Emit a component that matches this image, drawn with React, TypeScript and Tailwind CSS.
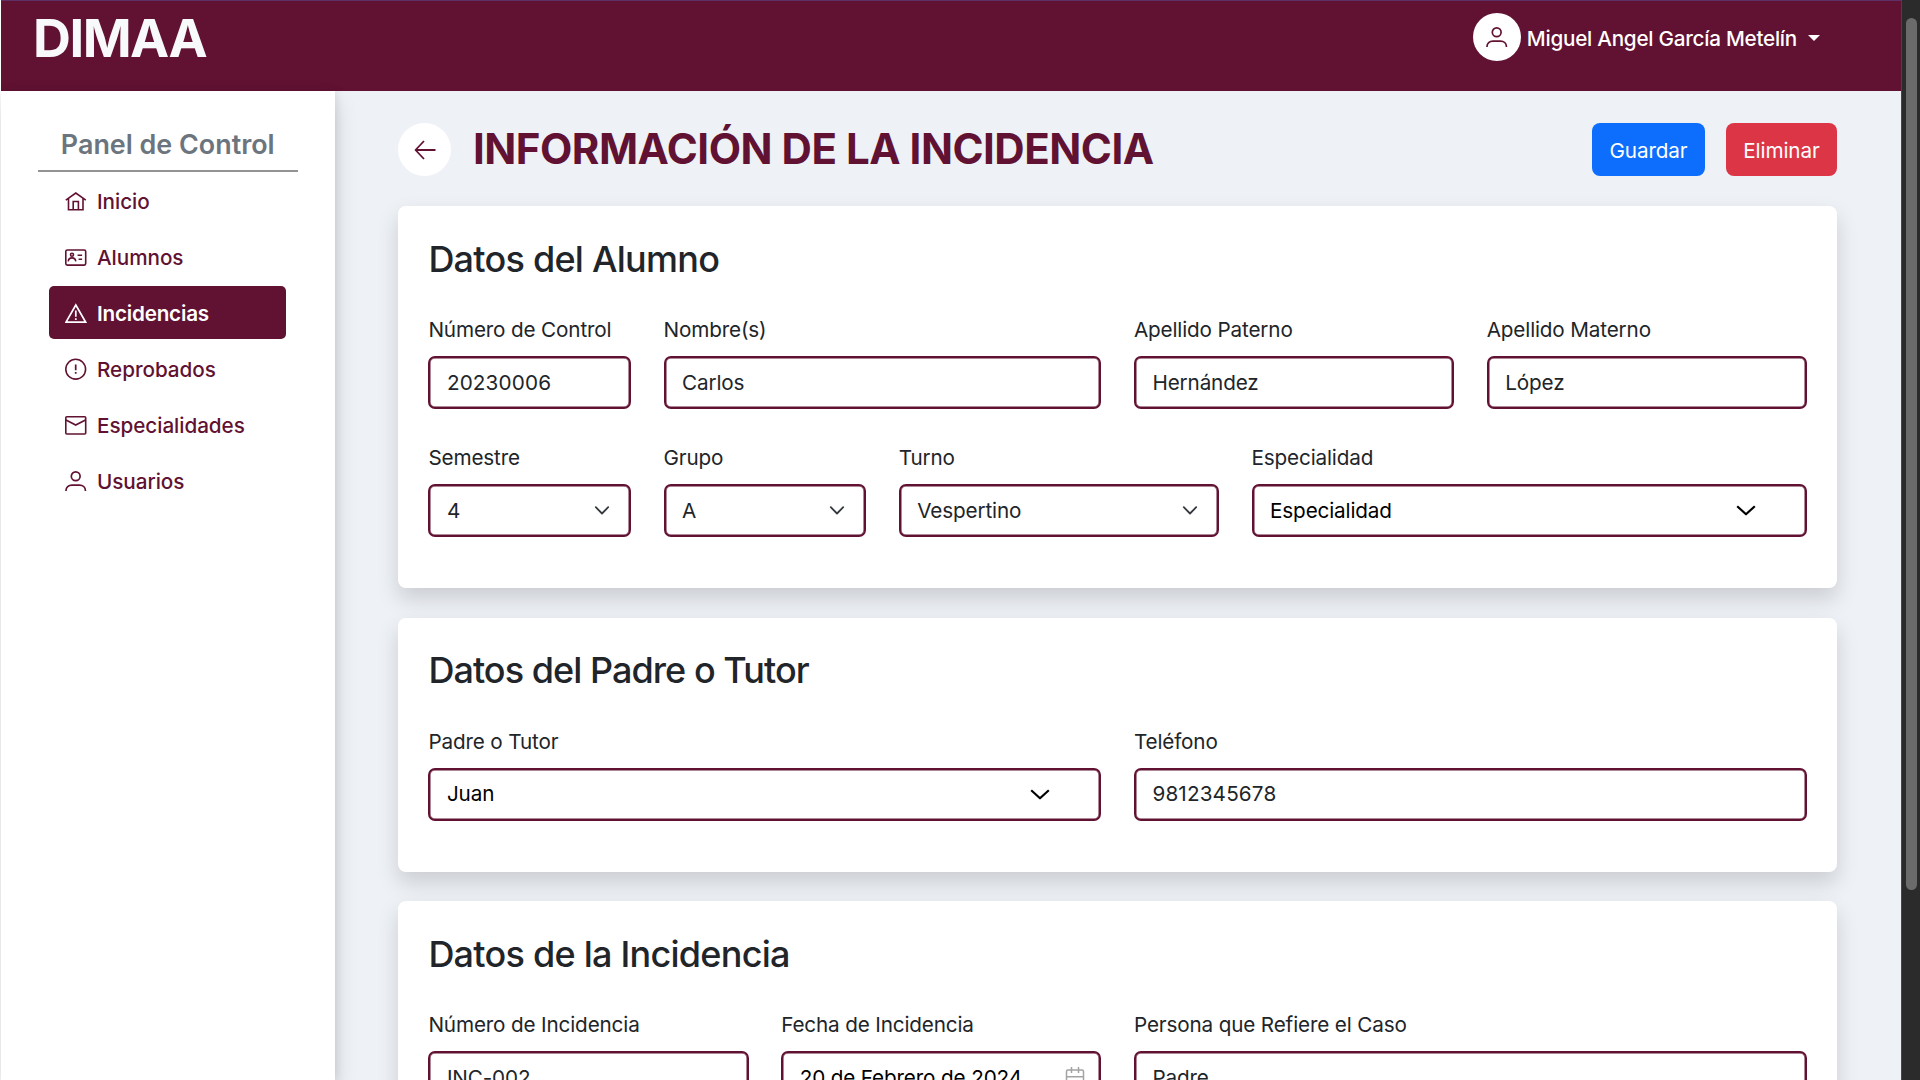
import React from 'react';

type IconProps = { children: React.ReactNode };

function NavIcon({ children }: IconProps) {
  return (
    <svg viewBox="0 0 22 22" className="h-[22px] w-[22px] shrink-0" fill="none" stroke="currentColor" strokeWidth="1.6">
      {children}
    </svg>
  );
}

const HomeIcon = () => (
  <NavIcon>
    <path d="M0.8 10.2 10.8 3l10 7.200M3.500 8.600V19.700H18V8.600" />
    <path d="M8.200 19.700V11.500h5.200v8.200" />
  </NavIcon>
);

const CardIcon = () => (
  <NavIcon>
    <rect x="0.8" y="4" width="19.900" height="15.100" rx="1.500" />
    <circle cx="7" cy="8.700" r="1.500" />
    <path d="M3.200 15.400c.4-2.600 1.900-3.500 3.800-3.500s3.400.9 3.800 3.500M12.600 9.300h4.500M13.600 13.200h3.500" />
  </NavIcon>
);

const WarningIcon = () => (
  <NavIcon>
    <path d="M10.800 3 20.600 20.100H1Z" strokeWidth="1.700" />
    <path d="M10.800 8.500v6.200M10.800 16.200v1.800" strokeWidth="1.700" />
  </NavIcon>
);

const AlertIcon = () => (
  <NavIcon>
    <circle cx="10.700" cy="11.200" r="9.900" />
    <path d="M10.700 6.600v5.700M10.700 13.900v1.900" strokeWidth="1.700" />
  </NavIcon>
);

const MailIcon = () => (
  <NavIcon>
    <rect x="0.8" y="2.800" width="19.900" height="17.200" rx="1" />
    <path d="M1 6l9.700 5L20.500 6" />
  </NavIcon>
);

const UserIcon = () => (
  <NavIcon>
    <circle cx="10.700" cy="6.300" r="4.400" strokeWidth="1.700" />
    <path d="M0.900 21c0-3.800 2.700-5.800 6-5.800h7.600c3.300 0 6 2 6 5.800" strokeWidth="1.700" />
  </NavIcon>
);

const navItems = [
  { label: 'Inicio', icon: <HomeIcon /> },
  { label: 'Alumnos', icon: <CardIcon /> },
  { label: 'Incidencias', icon: <WarningIcon />, active: true },
  { label: 'Reprobados', icon: <AlertIcon /> },
  { label: 'Especialidades', icon: <MailIcon /> },
  { label: 'Usuarios', icon: <UserIcon /> },
];

function Header() {
  return (
    <header className="ml-px flex h-[91px] shrink-0 items-start justify-between border-t border-[#5d3068] bg-[#611232] pr-[81px] pl-8">
      <div className="mt-[11px] text-[52.5px] leading-[53px] font-bold tracking-[-1.5px] text-[#f8f9fa]">DIMAA</div>
      <div className="mt-3 flex items-center text-white">
        <span className="flex size-12 items-center justify-center rounded-full bg-white pl-px text-[#611232]">
          <UserIcon />
        </span>
        <span className="mt-1 ml-1.5 text-[20.7px] font-medium tracking-[-0.26px]">Miguel Angel García Metelín</span>
        <svg viewBox="0 0 12 6" className="mt-0.5 ml-[11px] h-1.5 w-3" fill="currentColor">
          <path d="M0 0h12L6 6z" />
        </svg>
      </div>
    </header>
  );
}

function Sidebar() {
  return (
    <aside className="relative z-10 ml-px flex w-[333.500px] shrink-0 flex-col bg-white shadow-[0_10.7px_21.3px_rgba(0,0,0,0.15),2px_0_8px_rgba(0,0,0,0.08)]">
      <h2 className="mx-[37px] mt-7 h-[53px] border-b-2 border-[#919395] pt-[5px] text-center text-[26.9px] leading-[40px] font-semibold text-[#6c757d]">
        Panel de Control
      </h2>
      <nav className="mt-0.5 flex flex-col gap-[3px] px-12">
        {navItems.map((item) => (
          <a
            key={item.label}
            className={
              item.active
                ? 'flex h-[53px] w-[237px] items-center gap-2.5 rounded-[5px] bg-[#611232] pl-4 text-[20.7px] font-semibold tracking-[-0.22px] text-white'
                : 'flex h-[53px] w-[237px] items-center gap-2.5 rounded-[5px] pl-4 text-[20.7px] font-medium tracking-[-0.05px] text-[#611232]'
            }
          >
            {item.icon}
            <span className="pt-[3px]">{item.label}</span>
          </a>
        ))}
      </nav>
    </aside>
  );
}

type CardProps = { title: string; titleClass?: string; children: React.ReactNode };

function Card({ title, titleClass = 'tracking-[-0.75px]', children }: CardProps) {
  return (
    <section className="shrink-0 rounded-lg bg-white px-[30px] pt-[30.9px] pb-[19px] shadow-[0_10.7px_21.3px_rgba(0,0,0,0.15)]">
      <h3 className={`mb-[31.6px] text-[36px] leading-[44.8px] font-medium text-[#212529] ${titleClass}`}>{title}</h3>
      <div className="grid grid-cols-12 gap-x-[32.5px]">{children}</div>
    </section>
  );
}

type FieldProps = {
  label: string;
  value: string;
  span: string;
  kind?: 'input' | 'select' | 'combo' | 'date';
};

function Field({ label, value, span, kind = 'input' }: FieldProps) {
  const dark = kind === 'combo' || kind === 'date';
  const numeric = /^\d{2,}$/.test(value);
  return (
    <label className={span}>
      <span className="block pt-[0.9px] pb-[9.8px] text-[20.7px] leading-8 tracking-[-0.15px] text-[#212529]">{label}</span>
      <span className="mb-8 flex h-[53px] items-center justify-between rounded-[7px] border-2 border-[#611232] bg-white pl-[16.500px] shadow-[inset_0_0_0_0.500px_#611232]">
        <span
          className={`text-[20.7px] ${numeric ? 'tracking-[0.15px]' : 'tracking-[-0.14px]'} ${dark ? 'text-black' : 'text-[#212529]'}`}
        >
          {value}
        </span>
        {kind === 'select' && (
          <svg viewBox="0 0 16 9" className="mr-[19px] h-[9px] w-4" fill="none" stroke="#343a40" strokeWidth="1.8" strokeLinecap="round" strokeLinejoin="round">
            <path d="M1.800 1.200 8 7.500 14.200 1.200" />
          </svg>
        )}
        {kind === 'combo' && (
          <svg viewBox="0 0 20 11" className="mr-[49px] h-[11px] w-5" fill="none" stroke="#000" strokeWidth="2.200" strokeLinejoin="round">
            <path d="M1.200 1.200 10 9.300 18.800 1.200" />
          </svg>
        )}
        {kind === 'date' && (
          <svg viewBox="0 0 20 20" className="mr-3.5 mb-0.5 size-5" fill="none" stroke="#a3a3a3" strokeWidth="1.500">
            <rect x="1.500" y="3" width="17" height="16" rx="1.500" />
            <path d="M1.500 9.700h17M6.500 0v6M13.500 0v6" />
          </svg>
        )}
      </span>
    </label>
  );
}

function Scrollbar() {
  return (
    <div className="h-full w-[19px] shrink-0 border-l border-[#454545] bg-[#2b2b2b] pt-[18px] pl-1">
      <div className="h-[872px] w-[11px] rounded-full bg-[#6b6b6b]" />
    </div>
  );
}

export default function App() {
  return (
    <div className="flex h-[1080px] w-[1920px] overflow-hidden bg-white font-['Inter',sans-serif]">
      <div className="flex h-full w-[1901px] flex-col">
        <Header />
        <div className="flex min-h-0 flex-1">
          <Sidebar />
          <main className="flex min-w-0 flex-1 flex-col gap-[29.700px] bg-[#eef1f6] pt-8 pr-16 pl-[63.900px]">
            <div className="mb-[0.5px] flex h-[53px] shrink-0 items-center">
              <button className="flex size-[53px] items-center justify-center rounded-full bg-white">
                <svg viewBox="0 0 22 20" className="h-5 w-[22px]" fill="none" stroke="#611232" strokeWidth="1.800">
                  <path d="M10 1 1.500 10l8.500 9M1.500 10H21.500" strokeLinejoin="round" />
                </svg>
              </button>
              <h1 className="-mt-px ml-[21.500px] text-[42px] leading-[50px] font-bold tracking-[-0.47px] text-[#611232]">INFORMACIÓN DE LA INCIDENCIA</h1>
              <button className="ml-auto h-[53px] w-[113px] rounded-lg bg-[#0d6efd] pt-0.5 text-[20.7px] tracking-[-0.1px] text-white">Guardar</button>
              <button className="ml-[21px] h-[53px] w-[111px] rounded-lg bg-[#dc3545] pt-0.5 text-[20.7px] tracking-[-0.1px] text-white">Eliminar</button>
            </div>

            <Card title="Datos del Alumno">
              <Field label="Número de Control" value="20230006" span="col-span-2" />
              <Field label="Nombre(s)" value="Carlos" span="col-span-4" />
              <Field label="Apellido Paterno" value="Hernández" span="col-span-3" />
              <Field label="Apellido Materno" value="López" span="col-span-3" />
              <Field label="Semestre" value="4" span="col-span-2" kind="select" />
              <Field label="Grupo" value="A" span="col-span-2" kind="select" />
              <Field label="Turno" value="Vespertino" span="col-span-3" kind="select" />
              <Field label="Especialidad" value="Especialidad" span="col-span-5" kind="combo" />
            </Card>

            <Card title="Datos del Padre o Tutor" titleClass="tracking-[-0.95px]">
              <Field label="Padre o Tutor" value="Juan" span="col-span-6" kind="combo" />
              <Field label="Teléfono" value="9812345678" span="col-span-6" />
            </Card>

            <Card title="Datos de la Incidencia">
              <Field label="Número de Incidencia" value="INC-002" span="col-span-3" />
              <Field label="Fecha de Incidencia" value="20 de Febrero de 2024" span="col-span-3" kind="date" />
              <Field label="Persona que Refiere el Caso" value="Padre" span="col-span-6" />
            </Card>
          </main>
        </div>
      </div>
      <Scrollbar />
    </div>
  );
}
